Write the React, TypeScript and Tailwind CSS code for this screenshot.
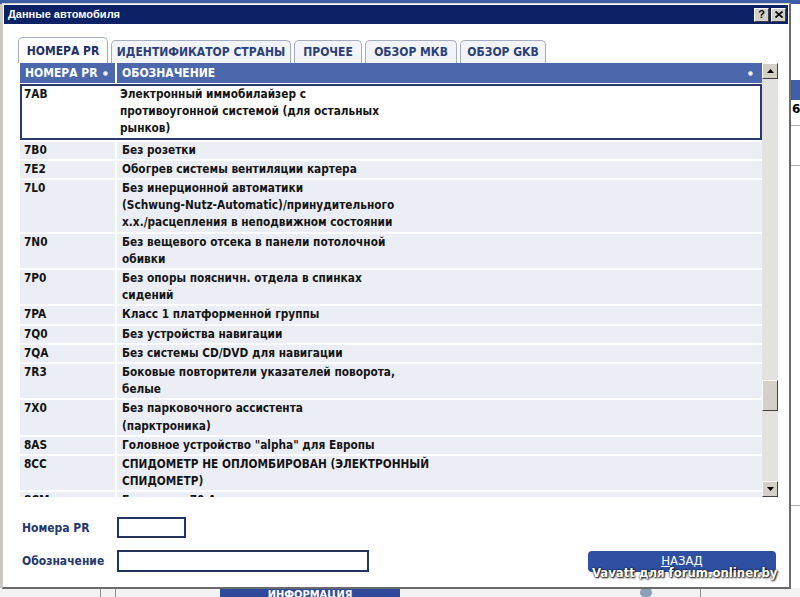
import React from "react";

type Row = { code: string; lines: string[]; selected?: boolean };

const rows: Row[] = [
  { code: "7AB", lines: ["Электронный иммобилайзер с", "противоугонной системой (для остальных", "рынков)"], selected: true },
  { code: "7B0", lines: ["Без розетки"] },
  { code: "7E2", lines: ["Обогрев системы вентиляции картера"] },
  { code: "7L0", lines: ["Без инерционной автоматики", "(Schwung-Nutz-Automatic)/принудительного", "х.х./расцепления в неподвижном состоянии"] },
  { code: "7N0", lines: ["Без вещевого отсека в панели потолочной", "обивки"] },
  { code: "7P0", lines: ["Без опоры поясничн. отдела в спинках", "сидений"] },
  { code: "7PA", lines: ["Класс 1 платформенной группы"] },
  { code: "7Q0", lines: ["Без устройства навигации"] },
  { code: "7QA", lines: ["Без системы CD/DVD для навигации"] },
  { code: "7R3", lines: ["Боковые повторители указателей поворота,", "белые"] },
  { code: "7X0", lines: ["Без парковочного ассистента", "(парктроника)"] },
  { code: "8AS", lines: ["Головное устройство \"alpha\" для Европы"] },
  { code: "8CC", lines: ["СПИДОМЕТР НЕ ОПЛОМБИРОВАН (ЭЛЕКТРОННЫЙ", "СПИДОМЕТР)"] },
  { code: "8CM", lines: ["Генератор 70 А"] },
];

const tabs = [
  { label: "НОМЕРА PR", w: "w-[90px]", active: true },
  { label: "ИДЕНТИФИКАТОР СТРАНЫ", w: "w-[180px]" },
  { label: "ПРОЧЕЕ", w: "w-[68px]" },
  { label: "ОБЗОР МКВ", w: "w-[92px]" },
  { label: "ОБЗОР GKB", w: "w-[86px]" },
];

function Dot() {
  return <span className="inline-block w-[5px] h-[5px] rounded-full bg-white border border-[#c8d0e4]" />;
}

function ScrollBtn({ up }: { up?: boolean }) {
  return (
    <div className="w-[16px] h-[16px] bg-[#d4d0c8] border border-t-white border-l-white border-r-[#404040] border-b-[#404040] flex items-center justify-center">
      <svg width="7" height="4" viewBox="0 0 7 4">
        {up ? <polygon points="0,4 7,4 3.5,0" fill="#000" /> : <polygon points="0,0 7,0 3.5,4" fill="#000" />}
      </svg>
    </div>
  );
}

export default function App() {
  const cond = "font-['DejaVu_Sans_Condensed','DejaVu_Sans',sans-serif] font-stretch-condensed";
  return (
    <div className="relative w-[800px] h-[597px] overflow-hidden bg-white font-['Liberation_Sans',sans-serif]">
      {/* underlying application */}
      <div className="absolute left-0 top-0 w-[800px] h-[4px] bg-[#3d5ea6]" />
      <div className="absolute left-0 top-[4px] w-[2px] h-[593px] bg-[#c8c8c8]" />
      <div className="absolute left-[790px] top-[80px] w-[10px] h-[20px] bg-[#3f5ea8]" />
      <div className="absolute left-[792px] top-[102px] text-[12px] font-bold text-black leading-[14px] font-['DejaVu_Sans',sans-serif]">6</div>
      <div className="absolute left-[790px] top-[125px] w-[10px] h-px bg-[#b0b0b0]" />
      <div className="absolute left-[790px] top-[165px] w-[10px] h-px bg-[#b0b0b0]" />
      <div className="absolute left-[790px] top-[505px] w-[10px] h-px bg-[#b0b0b0]" />
      <div className="absolute left-0 top-[588px] w-[800px] h-[9px] bg-[#f2f2f2]" />
      <div className={`absolute left-[220px] top-[588px] w-[180px] h-[12px] bg-[#2f4a9a] text-white text-[11px] font-bold leading-[14px] text-center ${cond}`}>
        <span className="underline">И</span>НФОРМАЦИЯ
      </div>
      <div className="absolute left-[100px] top-[588px] w-px h-[9px] bg-[#909090]" />
      <div className="absolute left-[115px] top-[588px] w-px h-[9px] bg-[#909090]" />
      <div className="absolute left-[640px] top-[588px] w-[12px] h-[9px] rounded-full bg-[#8ea0b8]" />
      <div className="absolute left-[700px] top-[588px] w-px h-[9px] bg-[#909090]" />

      {/* dialog window */}
      <div className="absolute left-[2px] top-[3px] w-[789px] h-[586px] bg-white border-l border-t border-[#d4d0c8] border-r-2 border-b-2 border-r-[#6a6a6a] border-b-[#6a6a6a] flex flex-col">
        {/* title bar */}
        <div className="h-[19px] mx-px mt-px bg-[#0c2266] flex items-center justify-between pl-[4px] pr-[2px]">
          <span className="text-white text-[11px] font-bold leading-none">Данные автомобиля</span>
          <div className="flex gap-[2px]">
            <div className="w-[15px] h-[14px] bg-[#d4d0c8] border border-t-white border-l-white border-r-[#404040] border-b-[#404040] flex items-center justify-center text-[11px] font-bold leading-none text-black">?</div>
            <div className="w-[15px] h-[14px] bg-[#d4d0c8] border border-t-white border-l-white border-r-[#404040] border-b-[#404040] flex items-center justify-center">
              <svg width="8" height="7" viewBox="0 0 8 7">
                <path d="M0.5 0.5 L7.5 6.5 M7.5 0.5 L0.5 6.5" stroke="#000" strokeWidth="1.6" />
              </svg>
            </div>
          </div>
        </div>

        {/* body */}
        <div className="flex flex-col pl-[17px] pr-[11px]">
          {/* tabs */}
          <div className="flex items-end gap-[3px] h-[26px] mt-[13px] -ml-[2px]">
            {tabs.map((t) => (
              <div
                key={t.label}
                className={`${t.w} ${t.active ? "h-[26px] bg-white text-[#1c2f63]" : "h-[23px] bg-[#f3f4f8] text-[#2b3f78]"} border border-b-0 border-[#a4acc0] rounded-t-[5px] flex items-center justify-center text-[12px] font-bold ${cond}`}
              >
                {t.label}
              </div>
            ))}
          </div>

          {/* table + scrollbar */}
          <div className="flex h-[434px]">
            <div className="flex-1 flex flex-col overflow-hidden">
              <div className={`h-[20px] bg-[#4b68ac] flex items-stretch text-white text-[12px] font-bold ${cond}`}>
                <div className="w-[95px] flex items-center gap-[5px] pl-[5px]">
                  НОМЕРА PR <Dot />
                </div>
                <div className="w-[2px] bg-white" />
                <div className="flex-1 flex items-center justify-between pl-[5px] pr-[9px]">
                  <span>ОБОЗНАЧЕНИЕ</span>
                  <Dot />
                </div>
              </div>
              <div className={`flex-1 overflow-hidden flex flex-col gap-[2px] pt-[1px] text-[11.75px] font-bold text-[#141414] leading-[17.2px] ${cond}`}>
                {rows.map((r) =>
                  r.selected ? (
                    <div key={r.code} className="flex bg-white border-2 border-[#2a3a6c]">
                      <div className="w-[93px] pl-[2px] shrink-0">{r.code}</div>
                      <div className="flex-1 pl-[5px]">
                        {r.lines.map((l, i) => (
                          <div key={i}>{l}</div>
                        ))}
                      </div>
                    </div>
                  ) : (
                    <div key={r.code} className="flex gap-[2px] shrink-0">
                      <div className="w-[95px] pl-[4px] bg-[#eceef6] shrink-0">{r.code}</div>
                      <div className="flex-1 pl-[5px] bg-[#eceef6]">
                        {r.lines.map((l, i) => (
                          <div key={i}>{l}</div>
                        ))}
                      </div>
                    </div>
                  )
                )}
              </div>
            </div>
            <div className="w-[16px] flex flex-col bg-[#e4e2de]">
              <ScrollBtn up />
              <div className="flex-1 relative">
                <div className="absolute left-0 top-[301px] w-[16px] h-[31px] bg-[#d4d0c8] border border-t-white border-l-white border-r-[#404040] border-b-[#404040]" />
              </div>
              <ScrollBtn />
            </div>
          </div>

          {/* form */}
          <div className={`flex flex-col gap-[12px] mt-[20px] text-[12px] font-bold text-[#24386e] ${cond}`}>
            <div className="flex items-center">
              <span className="w-[97px] pl-[2px]">Номера PR</span>
              <div className="w-[69px] h-[21px] border-2 border-[#23355f] bg-white" />
            </div>
            <div className="flex items-center justify-between">
              <div className="flex items-center">
                <span className="w-[97px] pl-[2px]">Обозначение</span>
                <div className="w-[252px] h-[22px] border-2 border-[#23355f] bg-white" />
              </div>
              <div className="w-[188px] h-[21px] mr-[2px] rounded-[4px] bg-[#2f4fa2] text-white flex items-center justify-center font-normal text-[13px]">
                <span><span className="underline">Н</span>АЗАД</span>
              </div>
            </div>
          </div>
        </div>
      </div>

      {/* watermark */}
      <div className={`absolute left-[592px] top-[565px] text-white text-[13px] font-bold leading-[16px] [text-shadow:1px_1px_2px_#000,0_0_2px_#000] ${cond}`}>
        Vavatt для forum.onliner.by
      </div>
    </div>
  );
}
